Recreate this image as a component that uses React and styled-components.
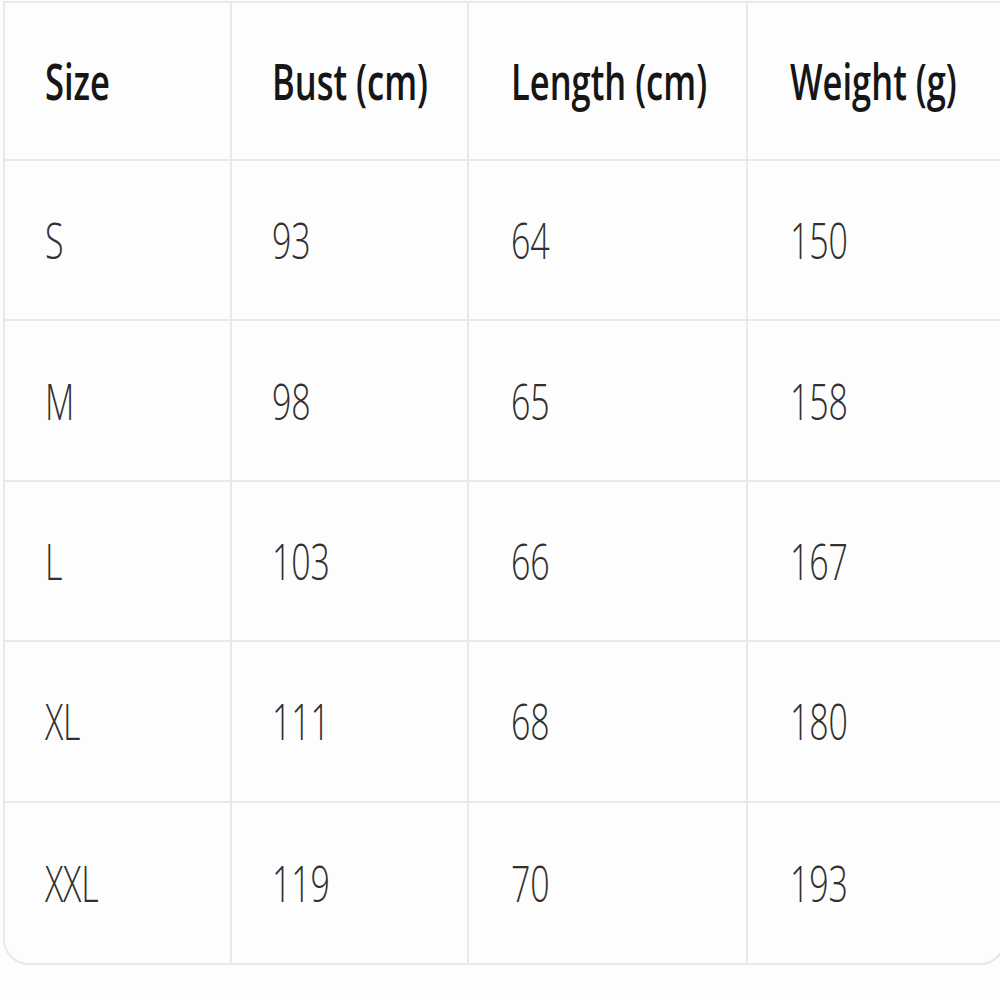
import styled, { createGlobalStyle } from 'styled-components';

const GlobalStyle = createGlobalStyle`
    html, body {
        margin: 0;
        padding: 0;
        background: #fdfdfd;
        overflow: hidden;
    }
`;

const Page = styled.div`
    width: 1000px;
    height: 1000px;
    padding: 1px 0 0 3px;
    box-sizing: border-box;
`;

const Table = styled.div`
    display: grid;
    grid-template-columns: 227px 237px 279px 260px;
    grid-template-rows: 158px repeat(5, 160.4px);
    width: 1003px;
    box-sizing: border-box;
    border: 2px solid #e8e8e8;
    border-radius: 0 0 26px 26px;
    background: #fdfdfd;
    font-family: "Open Sans", "Noto Sans", sans-serif;
`;

const Cell = styled.div`
    display: flex;
    align-items: center;
    box-sizing: border-box;
    padding-left: ${(p) => p.$pad}px;
    border-right: ${(p) => (p.$last ? 'none' : '2px solid #e8e8e8')};
    border-bottom: ${(p) => (p.$bottom ? 'none' : '2px solid #e8e8e8')};
`;

const Text = styled.span`
    display: inline-block;
    font-size: ${(p) => (p.$head ? 34.5 : 34)}px;
    font-weight: ${(p) => (p.$head ? 600 : 300)};
    color: ${(p) => (p.$head ? '#161616' : '#303030')};
    letter-spacing: ${(p) => (p.$head ? '0' : '-0.2px')};
    transform: scaleY(1.45);
    transform-origin: center;
    line-height: 1;
`;

const headers = ['Size', 'Bust (cm)', 'Length (cm)', 'Weight (g)'];
const rows = [
    ['S', '93', '64', '150'],
    ['M', '98', '65', '158'],
    ['L', '103', '66', '167'],
    ['XL', '111', '68', '180'],
    ['XXL', '119', '70', '193'],
];
const pads = [40, 40, 42, 42];

export default function App() {
    return (
        <Page>
            <GlobalStyle />
            <Table>
                {headers.map((h, i) => (
                    <Cell key={h} $pad={pads[i]} $last={i === 3}>
                        <Text $head>{h}</Text>
                    </Cell>
                ))}
                {rows.map((row, r) =>
                    row.map((v, i) => (
                        <Cell key={r + '-' + i} $pad={pads[i]} $last={i === 3} $bottom={r === rows.length - 1}>
                            <Text>{v}</Text>
                        </Cell>
                    ))
                )}
            </Table>
        </Page>
    );
}
